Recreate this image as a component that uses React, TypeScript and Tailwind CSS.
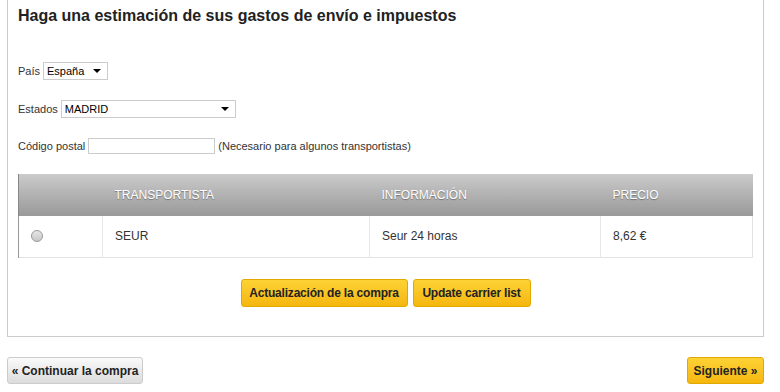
export default function App() {
  return (
    <div className="w-[780px] h-[392px] bg-white overflow-hidden text-[#333]" style={{ fontFamily: '"Liberation Sans", Arial, sans-serif' }}>
      <div className="ml-[7px] w-[757px] h-[337px] border border-t-0 border-[#cccccc] px-[10px] pt-[6px]">
        <h2 className="text-[16px] font-bold text-[#222] leading-[20px]">Haga una estimación de sus gastos de envío e impuestos</h2>

        <div className="mt-[36px] flex items-center text-[11px] h-[18px]">
          <span>País</span>
          <div className="ml-[3px] w-[65px] h-[18px] border border-[#cccccc] flex items-center justify-between px-[3px] text-[11px] text-black">
            <span>España</span>
            <span className="border-x-[4px] border-t-[4px] border-x-transparent border-t-black mr-[3px]" />
          </div>
        </div>

        <div className="mt-[20px] flex items-center text-[11px] h-[18px]">
          <span>Estados</span>
          <div className="ml-[3px] w-[175px] h-[18px] border border-[#cccccc] flex items-center justify-between px-[3px] text-[11px] text-black">
            <span>MADRID</span>
            <span className="border-x-[4px] border-t-[4px] border-x-transparent border-t-black mr-[3px]" />
          </div>
        </div>

        <div className="mt-[20px] flex items-center text-[11px] h-[16px]">
          <span>Código postal</span>
          <div className="ml-[3px] w-[127px] h-[16px] border border-[#cccccc]" />
          <span className="ml-[3px]">(Necesario para algunos transportistas)</span>
        </div>

        <table className="mt-[20px] w-[735px] border-collapse text-[12px] table-fixed">
          <thead>
            <tr className="h-[42px] bg-gradient-to-b from-[#cbcbcb] to-[#999999] text-white uppercase text-left" style={{ textShadow: '0 1px 1px rgba(0,0,0,0.35)' }}>
              <th className="w-[84px] font-normal border-l border-[#888]" />
              <th className="w-[267px] font-normal px-[12px]">Transportista</th>
              <th className="w-[231px] font-normal px-[12px]">Información</th>
              <th className="font-normal px-[12px]">Precio</th>
            </tr>
          </thead>
          <tbody>
            <tr className="h-[41px] border-b border-[#e2e2e2] text-[#333]">
              <td className="border-l border-[#999] border-r border-r-[#e8e8e8] px-[12px]">
                <span className="block w-[12px] h-[12px] rounded-full border border-[#9a9a9a] bg-gradient-to-b from-[#e6e6e6] to-[#c8c8c8]" />
              </td>
              <td className="px-[12px] border-r border-[#e8e8e8]">SEUR</td>
              <td className="px-[12px] border-r border-[#e8e8e8]">Seur 24 horas</td>
              <td className="px-[12px] border-r border-[#e2e2e2]">8,62 €</td>
            </tr>
          </tbody>
        </table>

        <div className="mt-[21px] flex justify-center gap-[5px]">
          <button className="h-[28px] w-[167px] rounded-[3px] border border-[#e0a800] bg-gradient-to-b from-[#fdd234] to-[#f5b70c] text-[12px] font-bold text-[#222] whitespace-nowrap tracking-[-0.2px]">Actualización de la compra</button>
          <button className="h-[28px] w-[118px] rounded-[3px] border border-[#e0a800] bg-gradient-to-b from-[#fdd234] to-[#f5b70c] text-[12px] font-bold text-[#222] whitespace-nowrap tracking-[-0.2px]">Update carrier list</button>
        </div>
      </div>

      <div className="mt-[20px] px-[7px] flex justify-between w-[771px]">
        <button className="h-[27px] w-[136px] rounded-[3px] border border-[#cccccc] bg-gradient-to-b from-[#fafafa] to-[#dcdcdc] text-[12px] font-bold text-[#222]">« Continuar la compra</button>
        <button className="h-[27px] w-[77px] rounded-[3px] border border-[#e0a800] bg-gradient-to-b from-[#fdd234] to-[#f5b70c] text-[12px] font-bold text-[#222]">Siguiente »</button>
      </div>
    </div>
  );
}
